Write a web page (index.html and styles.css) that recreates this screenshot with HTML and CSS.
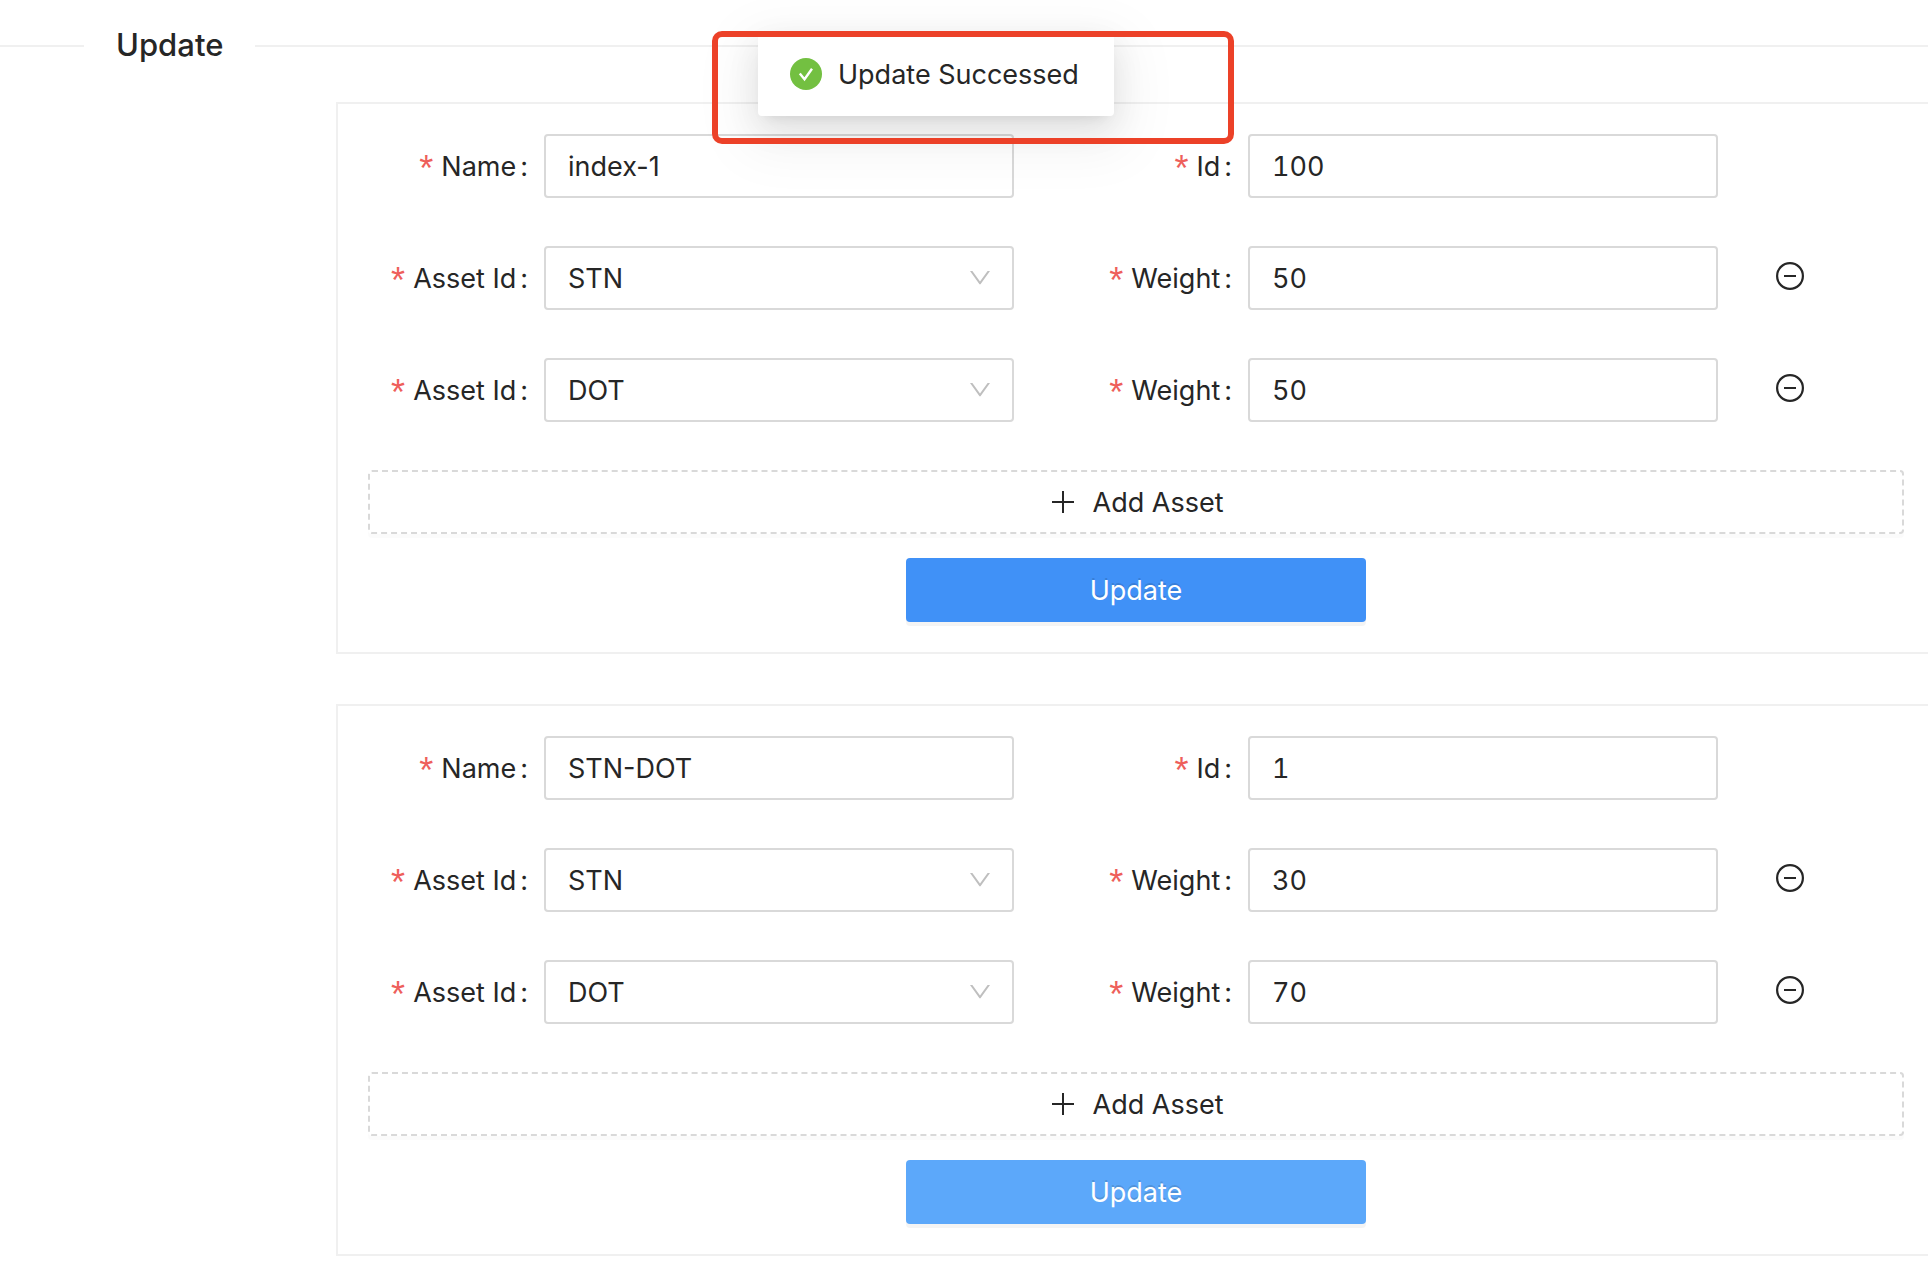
FILE: index.html
```html
<!DOCTYPE html>
<html lang="en">
<head>
<meta charset="utf-8">
<title>Update</title>
<link rel="stylesheet" href="styles.css">
</head>
<body>
<svg class="sprite" aria-hidden="true">
  <symbol id="down" viewBox="0 0 24 24"><path d="M2 5h2.400L12 15.400 19.600 5H22l-9.300 13a.9.9 0 0 1-1.400 0z"/></symbol>
  <symbol id="minus" viewBox="0 0 28 28"><circle cx="14" cy="14" r="12.900" fill="none" stroke="currentColor" stroke-width="2.200"/><path d="M8 13h12v2H8z"/></symbol>
  <symbol id="plus" viewBox="0 0 28 28"><path d="M13 3h2v10h10v2H15v10h-2V15H3v-2h10z"/></symbol>
</svg>

<main class="page">
  <h2 class="divider">Update</h2>

  <form class="card">
    <div class="row">
      <div class="field"><label for="name-1">Name</label><input class="control" id="name-1" type="text" value="index-1"></div>
      <div class="field"><label for="id-1">Id</label><input class="control number" id="id-1" type="text" value="100"></div>
    </div>
    <div class="row">
      <div class="field"><label for="asset-1a">Asset Id</label><div class="picker"><select class="control" id="asset-1a"><option selected>STN</option><option>DOT</option></select><svg class="arrow"><use href="#down"/></svg></div></div>
      <div class="field"><label for="weight-1a">Weight</label><input class="control number" id="weight-1a" type="text" value="50"></div>
      <button class="remove" type="button" aria-label="Remove asset"><svg><use href="#minus"/></svg></button>
    </div>
    <div class="row">
      <div class="field"><label for="asset-1b">Asset Id</label><div class="picker"><select class="control" id="asset-1b"><option>STN</option><option selected>DOT</option></select><svg class="arrow"><use href="#down"/></svg></div></div>
      <div class="field"><label for="weight-1b">Weight</label><input class="control number" id="weight-1b" type="text" value="50"></div>
      <button class="remove" type="button" aria-label="Remove asset"><svg><use href="#minus"/></svg></button>
    </div>
    <button class="btn add" type="button"><svg><use href="#plus"/></svg><span>Add Asset</span></button>
    <button class="btn primary" type="button"><span>Update</span></button>
  </form>

  <form class="card">
    <div class="row">
      <div class="field"><label for="name-2">Name</label><input class="control" id="name-2" type="text" value="STN-DOT"></div>
      <div class="field"><label for="id-2">Id</label><input class="control number" id="id-2" type="text" value="1"></div>
    </div>
    <div class="row">
      <div class="field"><label for="asset-2a">Asset Id</label><div class="picker"><select class="control" id="asset-2a"><option selected>STN</option><option>DOT</option></select><svg class="arrow"><use href="#down"/></svg></div></div>
      <div class="field"><label for="weight-2a">Weight</label><input class="control number" id="weight-2a" type="text" value="30"></div>
      <button class="remove" type="button" aria-label="Remove asset"><svg><use href="#minus"/></svg></button>
    </div>
    <div class="row">
      <div class="field"><label for="asset-2b">Asset Id</label><div class="picker"><select class="control" id="asset-2b"><option>STN</option><option selected>DOT</option></select><svg class="arrow"><use href="#down"/></svg></div></div>
      <div class="field"><label for="weight-2b">Weight</label><input class="control number" id="weight-2b" type="text" value="70"></div>
      <button class="remove" type="button" aria-label="Remove asset"><svg><use href="#minus"/></svg></button>
    </div>
    <button class="btn add" type="button"><svg><use href="#plus"/></svg><span>Add Asset</span></button>
    <button class="btn primary active" type="button"><span>Update</span></button>
  </form>
</main>

<div class="toast" role="status">
  <svg viewBox="0 0 32 32"><circle cx="16" cy="16" r="16" fill="#73c041"/><path d="M9.800 15.600l4.700 5.600 7.500-10.400" fill="none" stroke="#fff" stroke-width="2.400"/></svg>
  <span>Update Successed</span>
</div>
<div class="highlight"></div>
</body>
</html>
```
FILE: styles.css
```css
* {
  box-sizing: border-box;
}

body {
  margin: 0;
  background: #fff;
  color: #262626;
  font: 27px/44px Inter, "Liberation Sans", sans-serif;
}

.sprite {
  display: none;
}

svg {
  fill: currentColor;
  flex: none;
}

.page {
  display: flex;
  flex-direction: column;
}

.divider {
  display: flex;
  align-items: center;
  gap: 32px;
  margin: 20px 0 32px;
  font-size: 31px;
  line-height: 50px;
  font-weight: 500;
}

.divider::before,
.divider::after {
  content: "";
  height: 2px;
  margin-top: 2px;
  background: #f0f0f0;
}

.divider::before {
  width: 84px;
}

.divider::after {
  flex: 1;
}

.card {
  display: flex;
  flex-direction: column;
  gap: 48px;
  margin: 0 0 50px 336px;
  padding: 30px 24px 30px 30px;
  border: 2px solid #f0f0f0;
  border-right: 0;
}

.card:last-child {
  margin-bottom: 32px;
}

.row {
  display: grid;
  grid-template-columns: 11fr 11fr 2fr;
  align-items: center;
}

.field {
  display: grid;
  grid-template-columns: 176px 1fr;
  align-items: center;
  padding-right: 58px;
}

label {
  display: flex;
  justify-content: flex-end;
  padding: 4px 16px 0 0;
  white-space: nowrap;
}

label::before {
  content: "*";
  margin: 2px 8px 0 0;
  color: #ee5f5b;
  font-family: "Liberation Sans", sans-serif;
  font-size: 36px;
}

label::after {
  content: ":";
  margin-left: 4px;
}

.control {
  display: block;
  width: 100%;
  height: 64px;
  margin: 0;
  padding: 0 22px;
  border: 2px solid #d9d9d9;
  border-radius: 4px;
  background: transparent;
  color: inherit;
  font: inherit;
  appearance: none;
}

.control.number {
  font-variant-numeric: tabular-nums;
}

select.control {
  padding-top: 2px;
}

.picker {
  position: relative;
}

.arrow {
  position: absolute;
  top: 20px;
  right: 22px;
  width: 24px;
  height: 24px;
  color: #bfbfbf;
  pointer-events: none;
}

.remove {
  justify-self: start;
  padding: 0 0 4px;
  border: 0;
  background: none;
  color: #262626;
}

.remove svg {
  display: block;
  width: 28px;
  height: 28px;
}

.btn {
  display: flex;
  align-items: center;
  justify-content: center;
  height: 64px;
  padding: 0;
  border-radius: 4px;
  font: inherit;
}

.btn span {
  padding-top: 2px;
}

.add {
  gap: 16px;
  border: 2px dashed #d9d9d9;
  background: #fff;
  color: #262626;
  box-shadow: 0 4px 0 rgba(0, 0, 0, 0.016);
}

.add svg {
  width: 28px;
  height: 28px;
}

.primary {
  align-self: center;
  width: 30%;
  margin-top: -24px;
  border: 0;
  background: #4091f7;
  color: #fff;
  text-shadow: 0 -2px 0 rgba(0, 0, 0, 0.12);
  box-shadow: 0 4px 0 rgba(0, 0, 0, 0.045);
}

.primary.active {
  background: #5ca8fa;
}

.toast {
  position: absolute;
  top: 32px;
  left: 758px;
  display: flex;
  align-items: center;
  gap: 16px;
  min-width: 356px;
  height: 84px;
  padding: 0 32px;
  border-radius: 4px;
  background: #fff;
  white-space: nowrap;
  box-shadow: 0 6px 12px -8px rgba(0, 0, 0, 0.12), 0 12px 32px rgba(0, 0, 0, 0.09), 0 18px 56px 16px rgba(0, 0, 0, 0.05);
}

.toast span {
  padding-top: 2px;
}

.toast svg {
  width: 32px;
  height: 32px;
}

.highlight {
  position: absolute;
  top: 31px;
  left: 712px;
  width: 522px;
  height: 113px;
  border: 6px solid #ec4128;
  border-radius: 10px;
  pointer-events: none;
}
```
